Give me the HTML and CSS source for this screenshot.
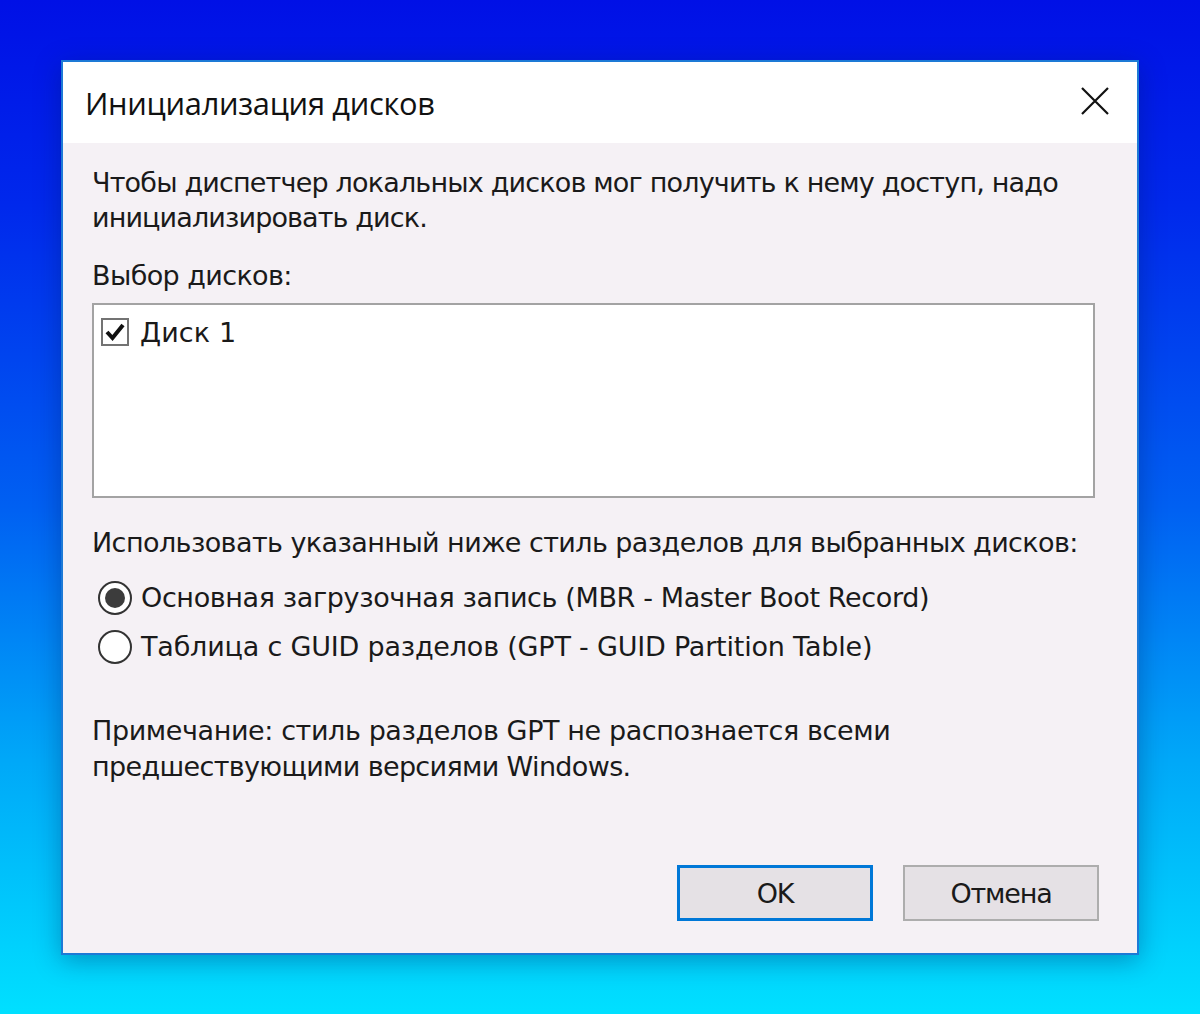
FILE: index.html
```html
<!DOCTYPE html>
<html lang="ru">
<head>
<meta charset="utf-8">
<title>Инициализация дисков</title>
<link rel="stylesheet" href="styles.css">
</head>
<body>
<div class="dialog">
  <div class="titlebar">
    <span class="title">Инициализация дисков</span>
    <svg class="close" width="28" height="28" viewBox="0 0 28 28"><path d="M1 1 L27 27 M27 1 L1 27" stroke="#111" stroke-width="2.2" fill="none"/></svg>
  </div>
  <div class="content">
    <p class="intro"><span class="l1">Чтобы диспетчер локальных дисков мог получить к нему доступ, надо</span><br><span class="l2">инициализировать диск.</span></p>
    <p class="label">Выбор дисков:</p>
    <div class="listbox">
      <div class="item">
        <span class="check"><svg width="22" height="22" viewBox="0 0 22 22"><path d="M3 11 L8.5 17 L19 4" stroke="#111" stroke-width="4" fill="none"/></svg></span>
        <span class="disk">Диск 1</span>
      </div>
    </div>
    <p class="label2">Использовать указанный ниже стиль разделов для выбранных дисков:</p>
    <div class="radios">
      <div class="radio-row"><span class="radio on"></span><span class="r1">Основная загрузочная запись (MBR - Master Boot Record)</span></div>
      <div class="radio-row"><span class="radio"></span><span class="r2">Таблица с GUID разделов (GPT - GUID Partition Table)</span></div>
    </div>
    <p class="note"><span class="n1">Примечание: стиль разделов GPT не распознается всеми</span><br><span class="n2">предшествующими версиями Windows.</span></p>
    <div class="buttons">
      <button class="btn default">OK</button>
      <button class="btn">Отмена</button>
    </div>
  </div>
</div>
</body>
</html>
```

FILE: styles.css
```css
html, body {
  margin: 0;
  padding: 0;
  height: 100%;
}
body {
  background: linear-gradient(180deg, #0010e6 0%, #0028ec 20%, #0060f2 50%, #00a8f8 75%, #00e0ff 100%);
  font-family: "DejaVu Sans", sans-serif;
  color: #1a1a1a;
  overflow: hidden;
}
.dialog {
  margin: 60px 0 0 61px;
  width: 1074px;
  height: 891px;
  border: 2px solid #1d7ad6;
  background: #f5f1f5;
  display: flex;
  flex-direction: column;
  box-shadow: 0 6px 24px rgba(0, 30, 90, 0.35);
}
.titlebar {
  height: 81px;
  background: #ffffff;
  display: flex;
  align-items: center;
  justify-content: space-between;
  padding: 0 28px 0 22px;
}
.title {
  font-family: "Open Sans", sans-serif;
  font-size: 30.8px;
  color: #111;
  letter-spacing: -0.3px;
}
.close {
  margin-top: -4px;
}
.content {
  flex: 1;
  padding: 22px 0 0 29px;
  display: flex;
  flex-direction: column;
  font-size: 27px;
  letter-spacing: -1.2px;
}
p {
  margin: 0;
}
.intro {
  line-height: 35px;
}
.l1 { letter-spacing: -0.82px; }
.l2 { letter-spacing: -0.88px; }
.label {
  margin-top: 24px;
  line-height: 34px;
  letter-spacing: -0.6px;
}
.listbox {
  margin-top: 10px;
  height: 195px;
  border: 2px solid #a3a3a3;
  background: #ffffff;
  padding: 10px 0 0 7px;
  box-sizing: border-box;
  width: 1003px;
}
.item {
  display: flex;
  align-items: center;
  gap: 11px;
  height: 34px;
}
.disk { letter-spacing: 0.1px; }
.check {
  width: 24px;
  height: 24px;
  border: 2px solid #737373;
  background: #fff;
  display: flex;
  align-items: center;
  justify-content: center;
}
.label2 {
  margin-top: 28px;
  line-height: 34px;
  letter-spacing: -0.58px;
}
.radios {
  margin-top: 20px;
  padding-left: 6px;
  display: flex;
  flex-direction: column;
  gap: 14px;
}
.radio-row {
  display: flex;
  align-items: center;
  gap: 9px;
  height: 35px;
}
.r1 { letter-spacing: -0.37px; }
.r2 { letter-spacing: -0.2px; }
.radio {
  width: 34px;
  height: 34px;
  border-radius: 50%;
  border: 2px solid #333;
  background: #fff;
  box-sizing: border-box;
  display: flex;
  align-items: center;
  justify-content: center;
}
.radio.on::after {
  content: "";
  width: 20px;
  height: 20px;
  border-radius: 50%;
  background: #3c3c3c;
}
.note {
  margin-top: 49px;
  line-height: 36px;
}
.n1 { letter-spacing: -0.4px; }
.n2 { letter-spacing: -0.65px; }
.buttons {
  margin-top: auto;
  margin-bottom: 32px;
  display: flex;
  justify-content: flex-end;
  gap: 30px;
  padding-right: 38px;
}
.btn {
  width: 196px;
  height: 56px;
  background: #e5e1e5;
  border: 2px solid #adadad;
  font-family: "DejaVu Sans", sans-serif;
  font-size: 27px;
  letter-spacing: -1.2px;
  color: #1a1a1a;
  padding: 0;
}
.btn.default {
  border: 3px solid #0078d7;
}
```
